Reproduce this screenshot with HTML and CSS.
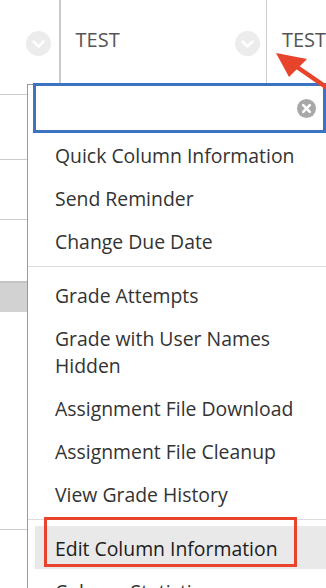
FILE: index.html
```html
<!DOCTYPE html>
<html lang="en">
<head>
  <meta charset="UTF-8" />
  <meta name="viewport" content="width=device-width, initial-scale=1.0"/>
  <title>Grade Center - Column Menu</title>
  <link rel="stylesheet" href="styles.css">
</head>
<body>

  <div class="grid">
    <div class="grid-head">
      <div class="col col-first">
        <span class="chev">
          <svg width="25" height="25" viewBox="0 0 25 25"><circle cx="12.5" cy="12.5" r="12.5" fill="#ececec"/><polyline points="7.5,10.5 12.5,15.5 17.5,10.5" fill="none" stroke="#fff" stroke-width="2.5" stroke-linecap="round" stroke-linejoin="round"/></svg>
        </span>
      </div>
      <div class="col col-mid">
        <span class="col-title">TEST</span>
        <span class="chev">
          <svg width="25" height="25" viewBox="0 0 25 25"><circle cx="12.5" cy="12.5" r="12.5" fill="#ececec"/><polyline points="7.5,10.5 12.5,15.5 17.5,10.5" fill="none" stroke="#fff" stroke-width="2.5" stroke-linecap="round" stroke-linejoin="round"/></svg>
        </span>
      </div>
      <div class="col col-last">
        <span class="col-title">TEST</span>
      </div>
    </div>
    <div class="grid-row row-a"></div>
    <div class="grid-row row-b"></div>
    <div class="grid-row row-c"></div>
    <div class="grid-band"></div>
    <div class="grid-row row-d"></div>
  </div>

  <div class="menu">
    <div class="menu-search">
      <span class="clear">
        <svg width="19" height="19" viewBox="0 0 19 19"><circle cx="9.5" cy="9.5" r="9.5" fill="#a8a8a8"/><path d="M6.2 6.2 L12.8 12.8 M12.8 6.2 L6.2 12.8" stroke="#fff" stroke-width="2.6" stroke-linecap="round"/></svg>
      </span>
    </div>
    <ul class="menu-group">
      <li>Quick Column Information</li>
      <li>Send Reminder</li>
      <li>Change Due Date</li>
    </ul>
    <ul class="menu-group">
      <li>Grade Attempts</li>
      <li>Grade with User Names Hidden</li>
      <li>Assignment File Download</li>
      <li>Assignment File Cleanup</li>
      <li>View Grade History</li>
    </ul>
    <ul class="menu-group">
      <li class="active">Edit Column Information<span class="callout"></span></li>
      <li>Column Statistics</li>
    </ul>
  </div>

  <svg class="pointer-arrow" width="326" height="120" viewBox="0 0 326 120">
    <line x1="297" y1="67" x2="336" y2="94" stroke="#e8432b" stroke-width="4.5"/>
    <polygon points="276,53 307,59 289,77" fill="#e8432b"/>
  </svg>

</body>
</html>
```

FILE: styles.css
```css
body {
  margin: 0;
  width: 326px;
  height: 588px;
  overflow: hidden;
  position: relative;
  background: #fff;
  font-family: 'Open Sans', 'Noto Sans', sans-serif;
  color: #333;
}

.grid-head {
  display: flex;
  height: 94px;
  border-bottom: 1px solid #cbcbcb;
}

.col {
  display: flex;
  align-items: flex-start;
  box-sizing: border-box;
  height: 100%;
}

.col-first {
  width: 61px;
  justify-content: flex-end;
  padding-right: 8px;
  border-right: 2px solid #cacaca;
}

.col-mid {
  width: 208px;
  justify-content: space-between;
  padding: 0 6px 0 15px;
  border-right: 1px solid #cfcfcf;
}

.col-last {
  flex: 1;
  padding-left: 15px;
}

.col-title {
  margin-top: 26px;
  font-size: 20px;
  line-height: 28px;
  color: #555;
}

.chev {
  display: block;
  margin-top: 31px;
  height: 25px;
}

.grid-row {
  border-bottom: 1px solid #cbcbcb;
}

.row-a { height: 64px; }
.row-b { height: 59px; }
.row-c { height: 61px; border-bottom: none; }

.grid-band {
  height: 29px;
  background: #d2d2d2;
  border-top: 2px solid #c3c3c3;
}

.row-d { height: 217px; }

/* dropdown */
.menu {
  position: absolute;
  left: 27px;
  top: 84px;
  width: 330px;
  background: #fff;
  border-left: 1px solid #9a9a9a;
  border-top: 1px solid #9a9a9a;
}

.menu-search {
  box-sizing: border-box;
  width: 293px;
  height: 50px;
  margin: -2px 0 0 5px;
  border: 3px solid #3b72c2;
  display: flex;
  align-items: center;
  justify-content: flex-end;
  padding-right: 7px;
}

.clear {
  display: block;
  height: 19px;
}

.menu-group {
  list-style: none;
  margin: 0;
  padding: 6px 0 4px 7px;
}

.menu-group:first-of-type {
  padding-top: 0;
}

.menu-group + .menu-group {
  border-top: 1px solid #dcdcdc;
}

.menu-group li {
  position: relative;
  padding: 9px 40px 7px 20px;
  font-size: 19.4px;
  line-height: 27px;
  width: 240px;
}

.menu-group li.active {
  background: #e9e9e9;
  color: #1c1c1c;
}

.callout {
  position: absolute;
  left: 9px;
  top: -9px;
  width: 253px;
  height: 50px;
  box-sizing: border-box;
  border: 3.5px solid #e8432b;
}

.pointer-arrow {
  position: absolute;
  left: 0;
  top: 0;
}
```
